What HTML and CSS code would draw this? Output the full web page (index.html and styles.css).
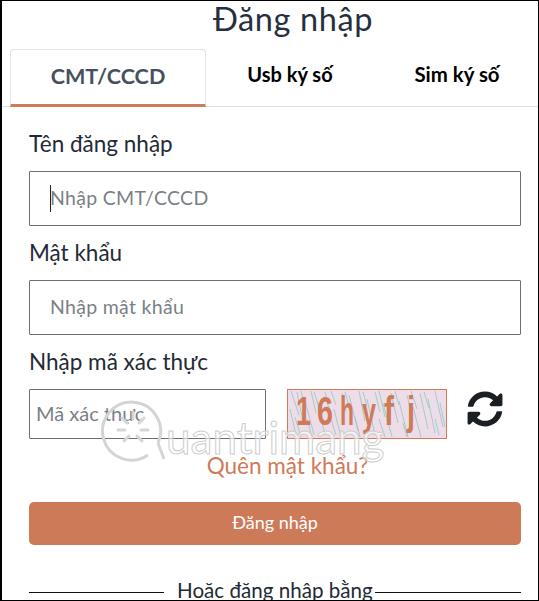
FILE: index.html
```html
<!DOCTYPE html>
<html lang="vi">
<head>
<meta charset="utf-8">
<title>Đăng nhập</title>
<link rel="stylesheet" href="styles.css">
</head>
<body>
<main class="frame">
  <h1 class="title">Đăng nhập</h1>
  <nav class="tabs">
    <a class="tab tab-active">CMT/CCCD</a>
    <a class="tab tab-usb">Usb ký số</a>
    <a class="tab tab-sim">Sim ký số</a>
  </nav>
  <form class="form">
    <label class="label">Tên đăng nhập</label>
    <div class="field field-focus"><span class="caret"></span><span class="placeholder">Nhập CMT/CCCD</span></div>
    <label class="label">Mật khẩu</label>
    <div class="field"><span class="placeholder">Nhập mật khẩu</span></div>
    <label class="label">Nhập mã xác thực</label>
    <div class="captcha-row">
      <div class="field field-small"><span class="placeholder">Mã xác thực</span></div>
      <svg class="captcha" viewBox="0 0 160 50" role="img" aria-label="Mã xác thực">
        <rect class="cap-bg" x="0.5" y="0.5" width="159" height="49"/>
        <path class="cap-noise" d="M4 2l8 24M10 3l6 30M14 2l4 16M17 8l10 38M24 2l5 22M27 3l7 20M30 12l8 34M38 3l6 26M44 2l5 14M47 20l7 28M55 4l4 18M58 3l7 24M62 6l9 36M72 2l6 30M76 3l4 14M80 10l8 36M88 3l5 20M92 2l6 26M96 14l9 34M104 4l7 30M108 2l4 14M112 12l9 36M120 6l6 26M124 2l6 18M126 18l8 30M133 4l8 36M137 3l5 16M141 10l7 34M148 2l8 36M153 14l5 24M8 28l6 20M3 20l6 26M20 30l5 18M44 30l5 16M68 28l5 20M92 30l6 18M116 34l4 14M148 30l4 16"/>
        <text class="cap-char" x="9" y="36" textLength="15" lengthAdjust="spacingAndGlyphs">1</text>
        <text class="cap-char" x="30" y="36" textLength="16" lengthAdjust="spacingAndGlyphs">6</text>
        <text class="cap-char" x="53" y="36" textLength="14" lengthAdjust="spacingAndGlyphs">h</text>
        <text class="cap-char" x="75" y="37" textLength="14" lengthAdjust="spacingAndGlyphs">y</text>
        <text class="cap-char" x="97" y="36" textLength="10" lengthAdjust="spacingAndGlyphs">f</text>
        <text class="cap-char" x="120" y="36" textLength="8" lengthAdjust="spacingAndGlyphs">j</text>
      </svg>
      <svg class="refresh" viewBox="0 0 512 512" role="img" aria-label="Làm mới">
        <path d="M370.72 133.28C339.458 104.008 298.888 87.962 255.848 88c-77.458.068-144.328 53.178-162.791 126.85-1.344 5.363-6.122 9.15-11.651 9.15H24.103c-7.498 0-13.194-6.807-11.807-14.176C33.933 94.924 134.813 8 256 8c66.448 0 126.791 26.136 171.315 68.685L463.03 40.97C478.149 25.851 504 36.559 504 57.941V192c0 13.255-10.745 24-24 24H345.941c-21.382 0-32.09-25.851-16.971-40.971l41.75-41.749zM32 296h134.059c21.382 0 32.09 25.851 16.971 40.971l-41.75 41.75c31.262 29.273 71.835 45.319 114.876 45.28 77.418-.07 144.315-53.144 162.787-126.849 1.344-5.363 6.122-9.15 11.651-9.15h57.304c7.498 0 13.194 6.807 11.807 14.176C478.067 417.076 377.187 504 256 504c-66.448 0-126.791-26.136-171.315-68.685L48.97 471.03C33.851 486.149 8 475.441 8 454.059V320c0-13.255 10.745-24 24-24z"/>
      </svg>
    </div>
    <a class="forgot">Quên mật khẩu?</a>
    <button class="submit" type="button">Đăng nhập</button>
    <div class="divider"><span class="rule rule-left"></span><span class="divider-text">Hoặc đăng nhập bằng</span><span class="rule rule-right"></span></div>
  </form>
  <div class="watermark" aria-hidden="true">
    <svg class="wm-icon" viewBox="0 0 70 70">
      <path class="wm-ring" d="M50 62A29 29 0 1 1 60 50"/>
      <path class="wm-ring" d="M60 50l6 16"/>
      <path class="wm-bulb" d="M24 25l5 5M35 19v7M46 25l-5 5M20 37h7M50 37h-7M26 48l5-5M44 48l-5-5"/>
    </svg>
    <span class="wm-text">uantrimang</span>
  </div>
</main>
</body>
</html>
```
FILE: styles.css
```css
* { box-sizing: border-box; }
html, body { margin: 0; padding: 0; height: 100%; background: #fff; }
body { font-family: "Lato", "Noto Sans", sans-serif; color: #212b36; overflow: hidden; }

.frame {
  position: relative;
  width: 539px;
  height: 601px;
  overflow: hidden;
  border: solid #000;
  border-width: 1px 1px 1px 2px;
  background: #fff;
}

.title {
  margin: 0;
  height: 48px;
  padding-left: 46px;
  font-size: 32.5px;
  line-height: 36px;
  font-weight: 400;
  letter-spacing: 0.6px;
  text-align: center;
  color: #25303f;
}

.tabs {
  display: flex;
  height: 58px;
  padding-left: 8px;
  border-bottom: 1px solid #dfdfdf;
}
.tab { display: block; flex-shrink: 0; text-align: center; color: #000; font-weight: 700; font-size: 20px; }
.tab-active {
  width: 196px;
  height: 58px;
  margin-bottom: -1px;
  line-height: 53px;
  font-size: 21.6px;
  color: #47505c;
  border: 1px solid #e3e3e3;
  border-bottom: 3px solid #cf7a58;
  border-radius: 4px 4px 0 0;
}
.tab-usb { width: 168px; line-height: 50px; }
.tab-sim { width: 166px; line-height: 50px; font-size: 20.4px; }

.form { display: flex; flex-direction: column; padding: 0 16px 0 27px; }

.label {
  display: block;
  height: 25px;
  margin-bottom: 16px;
  font-size: 22.5px;
  line-height: 27px;
  color: #232a35;
}
.form > .label:first-child { margin-top: 23px; }

.field {
  display: flex;
  align-items: center;
  position: relative;
  width: 492px;
  height: 55px;
  margin-bottom: 13px;
  padding: 0 0 2px 20px;
  border: 1px solid #6f6f6f;
  border-radius: 1px;
  background: #fff;
}
.placeholder { font-size: 19.5px; letter-spacing: 0.3px; color: #7b7f86; }
.caret { position: absolute; left: 20px; top: 13px; width: 1px; height: 27px; background: #222; }

.captcha-row { display: flex; align-items: flex-start; height: 50px; }
.field-small { width: 237px; height: 50px; margin: 0; padding-left: 6px; }
.field-small .placeholder { font-size: 20px; letter-spacing: 0; }

.captcha { display: block; width: 160px; height: 50px; margin-left: 21px; }
.cap-bg { fill: #ecdde9; stroke: #cf7a58; stroke-width: 1; }
.cap-noise { fill: none; stroke: #94c6bb; stroke-width: 0.8; }
.cap-char { font-family: "Liberation Sans", sans-serif; font-size: 41px; fill: #cf7a58; font-weight: 700; }

.refresh { display: block; width: 36px; height: 36px; margin: 2px 0 0 20px; fill: #1b1f24; }

.forgot {
  display: block;
  height: 28px;
  margin-top: 13px;
  padding-left: 24px;
  font-size: 22.5px;
  line-height: 28px;
  text-align: center;
  color: #cf7a58;
}

.submit {
  display: block;
  width: 492px;
  height: 43px;
  margin-top: 22px;
  padding: 0 0 3px;
  border: 0;
  border-radius: 5px;
  background: #cd7a59;
  color: #fff;
  font-family: inherit;
  font-size: 18px;
  line-height: 40px;
}

.divider { display: flex; align-items: center; margin-top: 33px; height: 26px; }
.rule { height: 1px; background: #111; position: relative; top: 1px; }
.rule-left { width: 135px; }
.rule-right { width: 146px; }
.divider-text { width: 211px; padding: 0 2px 2px 13px; white-space: nowrap; font-size: 20.6px; line-height: 24px; color: #232a35; }

.watermark {
  position: absolute;
  left: 96px;
  top: 392px;
  display: flex;
  align-items: flex-end;
  pointer-events: none;
}
.wm-icon { display: block; width: 70px; height: 70px; }
.wm-ring { fill: none; stroke: #d4d4d4; stroke-width: 3; }
.wm-bulb { fill: none; stroke: #d6d6d6; stroke-width: 3; stroke-linecap: round; }
.wm-text {
  margin: 0 0 1px -2px;
  font-family: "Lato", sans-serif;
  font-size: 44px;
  line-height: 50px;
  font-weight: 400;
  color: rgba(255, 255, 255, 0.55);
  -webkit-text-stroke: 1px #cdcdcd;
}
```
